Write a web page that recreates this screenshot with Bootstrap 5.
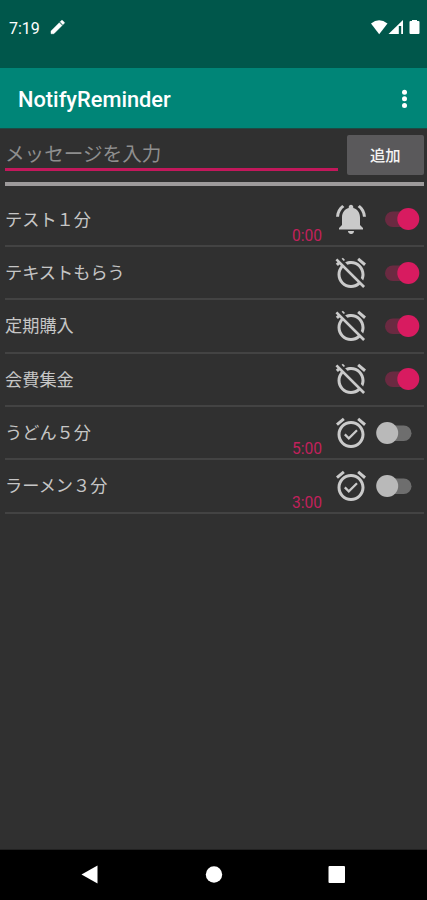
<!DOCTYPE html>
<html lang="ja">
<head>
<meta charset="utf-8">
<meta name="viewport" content="width=device-width, initial-scale=1">
<title>NotifyReminder</title>
<link href="https://cdn.jsdelivr.net/npm/bootstrap@5.3.0/dist/css/bootstrap.min.css" rel="stylesheet">
<style>
body{background:#303030;color:#c6c6c6;font-family:Roboto,"Noto Sans CJK JP",sans-serif;height:900px;overflow:hidden}
svg{display:block;flex:none}
.statusbar{height:68px;background:#00574b;color:#fff;padding:18px 7px 0 9px;font-size:16px;line-height:21px}
.appbar{height:61px;background:#008577;color:#fff;padding:3px 13px 0 18px;border-bottom:1px solid #1d4a44}
.apptitle{font-size:21.8px;font-weight:500;line-height:30px}
.entry{height:52.5px;padding:6px 3.5px 0 5px}
.entry-input{width:333px;height:36px;border:0;border-bottom:3px solid #c2185b;background:transparent;color:#fff;padding:5px 0 0 0;font-size:19.6px;line-height:28px;outline:0}
.entry-input::placeholder{color:#8e8e8e;opacity:1}
.add-btn{width:76.5px;height:40px;border:0;border-radius:2px;background:#5a595b;color:#f4f4f4;font-size:15.3px;font-weight:500;padding:2px 0 0}
.rule{height:4px;margin:0 3px 8px 5px;background:#9d9a9b}
.task{height:53.35px;margin:0 3px 0 5px;border-bottom:2px solid #434343}
.task-name{font-size:17.2px;font-weight:400;line-height:26px;padding-top:1px}
.task-time{font-size:15.6px;line-height:17px;color:#c2215c;margin-right:11px}
.toggle{width:50px;height:22px;margin-left:5px}
.navkeys{height:51px;background:#000;border-top:1px solid #222}
</style>
<script src="https://cdn.jsdelivr.net/npm/bootstrap@5.3.0/dist/js/bootstrap.bundle.min.js"></script>
</head>
<body class="d-flex flex-column m-0">
<svg width="0" height="0" class="d-none">
<symbol id="bell" viewBox="0 0 24 24"><path d="M7.58 4.08L6.15 2.65C3.75 4.48 2.17 7.3 2.03 10.5h2c.15-2.65 1.51-4.97 3.55-6.42zm12.39 6.42h2c-.15-3.2-1.73-6.02-4.12-7.85l-1.42 1.43c2.02 1.45 3.39 3.77 3.54 6.42zM18 11c0-3.07-1.64-5.64-4.5-6.32V4c0-.83-.67-1.5-1.5-1.5s-1.5.67-1.5 1.5v.68C7.63 5.36 6 7.92 6 11v5l-2 2v1h16v-1l-2-2v-5zm-6 11c.14 0 .27-.01.4-.04.65-.14 1.18-.58 1.44-1.18.1-.24.15-.5.15-.78h-4c.01 1.1.9 2 2.01 2z"/></symbol>
<symbol id="alarm-off" viewBox="0 0 24 24"><path d="M12 6c3.87 0 7 3.13 7 7 0 .84-.16 1.65-.43 2.4l1.52 1.52c.58-1.19.91-2.51.91-3.92 0-4.97-4.03-9-9-9-1.41 0-2.73.33-3.92.91L9.6 6.43C10.35 6.16 11.16 6 12 6zm10-.28l-4.6-3.86-1.29 1.53 4.6 3.86L22 5.72zM2.92 2.29L1.65 3.57 2.98 4.9l-1.11.93 1.42 1.42 1.11-.94.8.8C3.83 8.69 3 10.75 3 13c0 4.97 4.02 9 9 9 2.25 0 4.31-.83 5.89-2.2l2.2 2.2 1.27-1.27L3.89 3.27l-.97-.98zm13.55 16.1C15.26 19.39 13.7 20 12 20c-3.87 0-7-3.13-7-7 0-1.7.61-3.26 1.61-4.47l9.86 9.86zM8.02 3.28L6.6 1.86l-.86.71 1.42 1.42.86-.71z"/></symbol>
<symbol id="alarm-on" viewBox="0 0 24 24"><path d="M22 5.72l-4.6-3.86-1.29 1.53 4.6 3.86L22 5.72zM7.88 3.39L6.6 1.86 2 5.71l1.29 1.53 4.59-3.85zM12 4c-4.97 0-9 4.03-9 9s4.02 9 9 9c4.97 0 9-4.03 9-9s-4.03-9-9-9zm0 16c-3.87 0-7-3.13-7-7s3.13-7 7-7 7 3.13 7 7-3.13 7-7 7z"/><path d="M10.54 14.53l-2.13-2.12-1.06 1.06 3.18 3.18 6-6-1.06-1.06-4.93 4.94z"/></symbol>
<symbol id="sw-on" viewBox="0 0 50 22"><rect x="11" y="3.5" width="28" height="15.4" rx="7.7" fill="#6a2a41"/><circle cx="34.3" cy="11" r="11" fill="#d81b60"/></symbol>
<symbol id="sw-off" viewBox="0 0 50 22"><rect x="10" y="3.5" width="27.5" height="15.4" rx="7.7" fill="#6e6e6e"/><circle cx="13.2" cy="11" r="11" fill="#b9b9b9"/></symbol>
</svg>
<header>
<div class="statusbar d-flex align-items-start">
<span>7:19</span>
<svg width="18" height="18" viewBox="0 0 24 24" fill="#fff" stroke="#fff" stroke-width=".6" class="ms-2 ps-0"><path d="M4 17.25V21h3.750L18.810 9.940l-3.750-3.750L4 17.250zM21.710 7.040a1 1 0 0 0 0-1.410l-2.340-2.340a1 1 0 0 0-1.410 0l-1.830 1.830 3.750 3.750 1.830-1.830z"/></svg>
<svg width="50" height="18" viewBox="0 0 50 18" fill="#fff" class="ms-auto"><path d="M1 5.500Q9 -1.200 17.500 5.500L9.200 16.200z"/><path d="M18.500 16L33 2V16z"/><path d="M28.800 8h2.400v8h-2.400z" fill="#00574b"/><path d="M39.500 4q0-1 1-1h1.500V2h5v1h1.500q1 0 1 1v11q0 1-1 1h-8q-1 0-1-1z"/></svg>
</div>
<nav class="appbar navbar flex-nowrap justify-content-between">
<span class="apptitle">NotifyReminder</span>
<svg width="20" height="24" viewBox="0 0 20 24" fill="#fff"><circle cx="10.500" cy="4.200" r="2.500"/><circle cx="10.500" cy="10.800" r="2.500"/><circle cx="10.500" cy="17.400" r="2.500"/></svg>
</nav>
</header>
<main class="flex-grow-1">
<form class="entry d-flex justify-content-between align-items-start">
<input class="entry-input" type="text" placeholder="メッセージを入力" aria-label="メッセージを入力">
<button class="add-btn" type="button">追加</button>
</form>
<div class="rule"></div>
<div class="task d-flex align-items-center"><span class="task-name me-auto">テスト１分</span><span class="task-time align-self-end">0:00</span><svg width="36" height="36" fill="#cacaca"><use href="#bell"/></svg><svg class="toggle"><use href="#sw-on"/></svg></div>
<div class="task d-flex align-items-center"><span class="task-name me-auto">テキストもらう</span><svg width="36" height="36" fill="#cacaca"><use href="#alarm-off"/></svg><svg class="toggle"><use href="#sw-on"/></svg></div>
<div class="task d-flex align-items-center"><span class="task-name me-auto">定期購入</span><svg width="36" height="36" fill="#cacaca"><use href="#alarm-off"/></svg><svg class="toggle"><use href="#sw-on"/></svg></div>
<div class="task d-flex align-items-center"><span class="task-name me-auto">会費集金</span><svg width="36" height="36" fill="#cacaca"><use href="#alarm-off"/></svg><svg class="toggle"><use href="#sw-on"/></svg></div>
<div class="task d-flex align-items-center"><span class="task-name me-auto">うどん５分</span><span class="task-time align-self-end">5:00</span><svg width="36" height="36" fill="#cacaca"><use href="#alarm-on"/></svg><svg class="toggle"><use href="#sw-off"/></svg></div>
<div class="task d-flex align-items-center"><span class="task-name me-auto">ラーメン３分</span><span class="task-time align-self-end">3:00</span><svg width="36" height="36" fill="#cacaca"><use href="#alarm-on"/></svg><svg class="toggle"><use href="#sw-off"/></svg></div>
</main>
<footer class="navkeys">
<svg width="427" height="50" viewBox="0 0 427 50" fill="#fff"><path d="M81.500 24.500L97.500 15.500V33.500z"/><circle cx="214" cy="24.500" r="8.200"/><rect x="328.500" y="16" width="16.500" height="17" rx="1"/></svg>
</footer>
</body>
</html>
